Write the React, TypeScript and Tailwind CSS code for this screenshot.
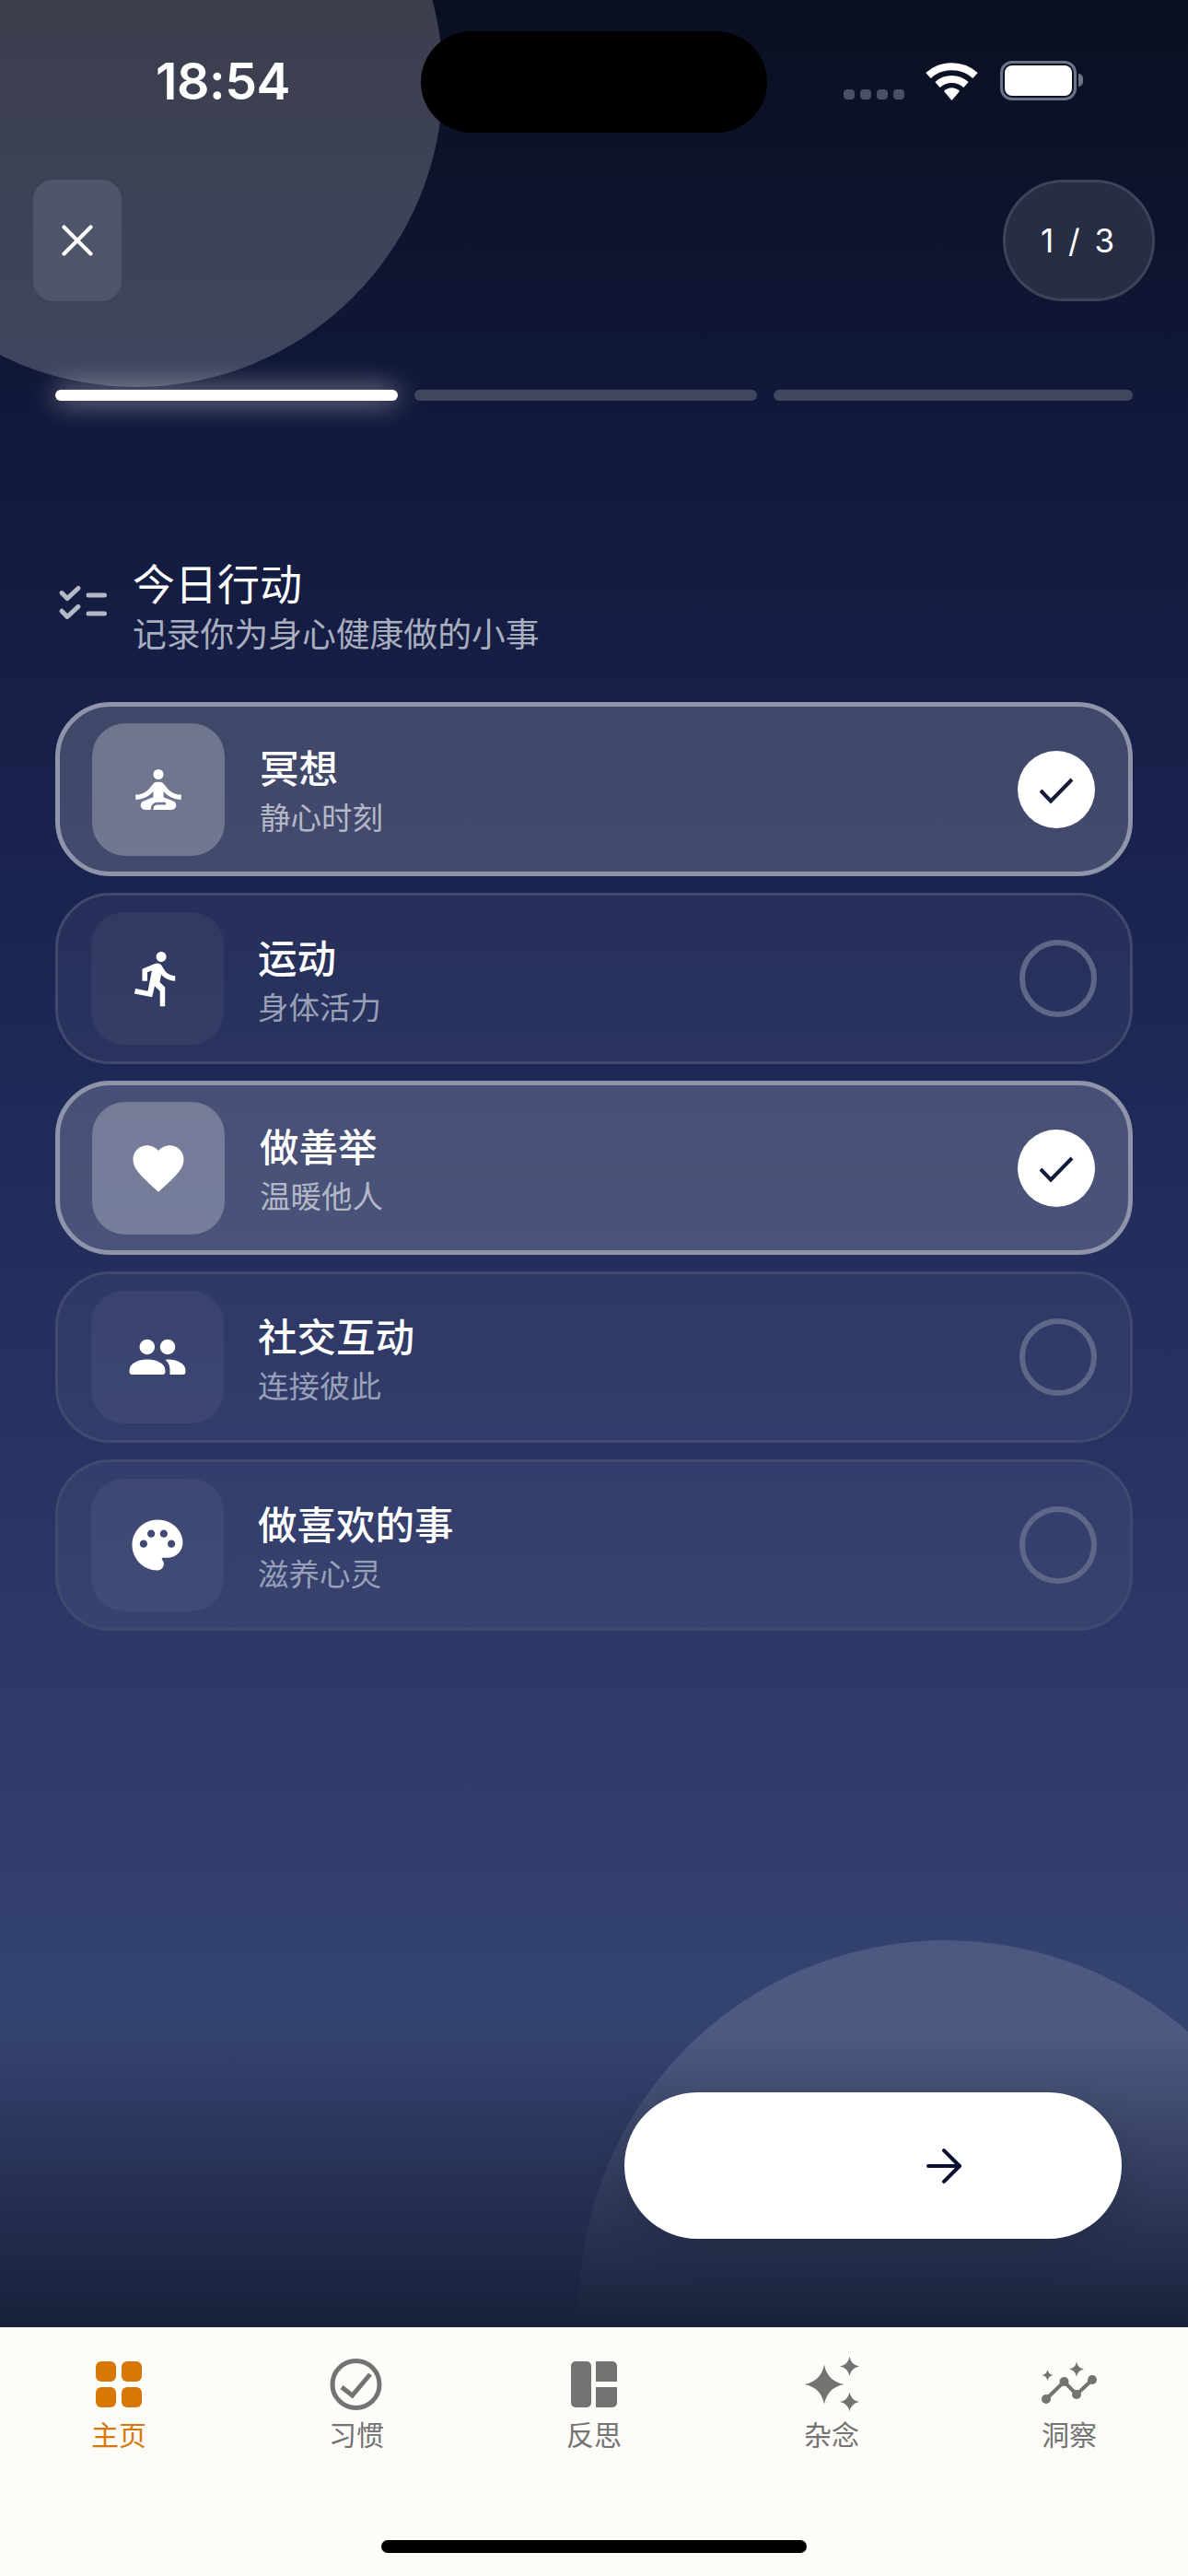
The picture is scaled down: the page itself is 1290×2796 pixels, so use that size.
import { FC, ReactNode } from "react";
import { ArrowRight, X } from "lucide-react";
import {
  MdDirectionsRun,
  MdFavorite,
  MdPalette,
  MdSelfImprovement
} from "react-icons/md";

const star = (cx: number, cy: number, r: number) => {
  const k = r * 0.16;
  return `M${cx} ${cy - r}Q${cx + k} ${cy - k} ${cx + r} ${cy}Q${cx + k} ${cy + k} ${cx} ${cy + r}Q${cx - k} ${cy + k} ${cx - r} ${cy}Q${cx - k} ${cy - k} ${cx} ${cy - r}Z`;
};

const WifiIcon = () => (
  <svg width="59" height="43" viewBox="0 0 59 43" fill="none" stroke="white">
    <path d="M4 16C18 3 41 3 55 16" strokeWidth="8" />
    <path d="M14 26C23 18 36 18 45 26" strokeWidth="8" />
    <path d="M21 33C26 28 33 28 38 33L29.5 43Z" fill="white" stroke="none" />
  </svg>
);

const PeopleIcon = () => (
  <svg width="66" height="66" viewBox="0 0 66 66" fill="white">
    <circle cx="21.8" cy="22" r="8.3" />
    <circle cx="44" cy="22" r="8.3" />
    <path d="M2.6 47C2.6 40 12 35.5 22 35.5C32 35.5 41.4 40 41.4 47V49.5A2.5 2.5 0 0 1 39 52H5A2.5 2.5 0 0 1 2.6 49.5Z" />
    <path d="M44 35.5C54 35.5 63.4 40 63.4 47V49.5A2.5 2.5 0 0 1 61 52H46.5V47C46.5 42 44.5 38.5 41.5 36Z" />
  </svg>
);

const StatusBar = () => (
  <div className="flex h-[110px] items-center pl-[169px]">
    <span className="mb-[2px] w-[288px] font-['Inter',sans-serif] text-[55.5px] font-semibold leading-none tracking-[-0.5px] text-white">
      18:54
    </span>
    <div className="h-[110px] w-[376px] rounded-[55px] bg-black" />
    <div className="mb-[4px] ml-[83px] flex items-end">
      <div className="mb-[1px] flex gap-[6px]">
        {[0, 1, 2, 3].map((i) => (
          <span key={i} className="h-[11px] w-[12px] rounded-[4px] bg-[#4a4f61]" />
        ))}
      </div>
      <div className="ml-[22px]">
        <WifiIcon />
      </div>
      <div className="ml-[23px] flex items-center">
        <div className="h-[43px] w-[83px] rounded-[13px] border-[3px] border-[#6d7285] p-[2px]">
          <div className="h-full w-full rounded-[8px] bg-white" />
        </div>
        <div className="ml-[2px] h-[14px] w-[5px] rounded-r-full bg-[#6d7285]" />
      </div>
    </div>
  </div>
);

const TopBar = () => (
  <div className="mt-[51px] flex items-center justify-between pl-[36px] pr-[36px]">
    <button className="flex h-[132px] w-[96px] items-center justify-center rounded-[22px] bg-[#50566a] text-white">
      <X size={58} strokeWidth={1.7} />
    </button>
    <div className="flex h-[132px] w-[165px] items-center justify-center rounded-[66px] border-[3px] border-[#3d4358] bg-[#272d43] font-['Inter',sans-serif] text-[35px] tracking-[3px] text-white">
      1 / 3
    </div>
  </div>
);

const Progress = () => (
  <div className="mt-[96px] flex gap-[18px] px-[60px]">
    <div className="h-[12px] w-[372px] rounded-full bg-white shadow-[0_0_30px_rgba(255,255,255,0.7)]" />
    <div className="h-[12px] w-[372px] rounded-full bg-[#3f465e]" />
    <div className="h-[12px] flex-1 rounded-full bg-[#3f465e]" />
  </div>
);

const Header = () => (
  <div className="mt-[171px] flex px-[60px]">
    <svg
      className="mt-[19px] shrink-0"
      width="60"
      height="60"
      viewBox="0 0 60 60"
      fill="none"
      stroke="#b5b9c6"
      strokeWidth="5"
      strokeLinecap="round"
      strokeLinejoin="round"
    >
      <path d="M7 18.6L13 24.6L25 13.5" />
      <path d="M7 38.2L13 44.5L25 33.4" />
      <path d="M36 21H53.5" />
      <path d="M36 41H53.5" />
    </svg>
    <div className="ml-[24px]">
      <h1 className="text-[46px] font-normal leading-[56px] text-white">今日行动</h1>
      <p className="text-[36.8px] leading-[54px] text-[#a9aebf]">记录你为身心健康做的小事</p>
    </div>
  </div>
);

interface ActionCardProps {
  icon: ReactNode;
  title: string;
  subtitle: string;
  checked?: boolean;
}

const ActionCard: FC<ActionCardProps> = ({ icon, title, subtitle, checked }) => (
  <div
    className={
      checked
        ? "flex items-center rounded-[60px] border-[5px] border-[#8f94aa] bg-white/18 py-[17.5px] pl-[35px] pr-[36px]"
        : "flex items-center rounded-[60px] border-[3px] border-[#414a6e] bg-white/5 py-[18px] pl-[36px] pr-[36px]"
    }
  >
    <div
      className={
        checked
          ? "flex h-[144px] w-[144px] shrink-0 items-center justify-center rounded-[36px] bg-white/25 text-white"
          : "flex h-[144px] w-[144px] shrink-0 items-center justify-center rounded-[36px] bg-white/5 text-white"
      }
    >
      {icon}
    </div>
    <div className={checked ? "ml-[38px] flex-1 pt-[5px]" : "ml-[37px] flex-1 pt-[5px]"}>
      <p className="text-[42.5px] font-medium leading-[58px] text-white">{title}</p>
      <p
        className={
          checked
            ? "text-[33.5px] leading-[48px] text-[#b4b8c6]"
            : "text-[33.5px] leading-[48px] text-[#98a0b8]"
        }
      >
        {subtitle}
      </p>
    </div>
    {checked ? (
      <div className="h-[84px] w-[84px] rounded-full bg-white">
        <svg width="84" height="84" viewBox="0 0 84 84" fill="none" stroke="#141b3a" strokeWidth="4">
          <path d="M25 43L36 54.5L59 31" />
        </svg>
      </div>
    ) : (
      <div className="h-[84px] w-[84px] rounded-full border-[6px] border-[#5e6788]" />
    )}
  </div>
);

const actions: ActionCardProps[] = [
  { icon: <MdSelfImprovement size={66} />, title: "冥想", subtitle: "静心时刻", checked: true },
  { icon: <MdDirectionsRun size={66} />, title: "运动", subtitle: "身体活力" },
  { icon: <MdFavorite size={66} />, title: "做善举", subtitle: "温暖他人", checked: true },
  { icon: <PeopleIcon />, title: "社交互动", subtitle: "连接彼此" },
  { icon: <MdPalette size={66} />, title: "做喜欢的事", subtitle: "滋养心灵" }
];

const grey = "#737373";

const HomeIcon = () => (
  <svg width="60" height="60" viewBox="0 0 60 60" fill="#d97706">
    <rect x="5" y="5" width="22" height="22" rx="6" />
    <rect x="33" y="5" width="22" height="22" rx="6" />
    <rect x="5" y="33" width="22" height="22" rx="6" />
    <rect x="33" y="33" width="22" height="22" rx="6" />
  </svg>
);

const HabitIcon = () => (
  <svg width="60" height="60" viewBox="0 0 60 60" fill="none" stroke={grey} strokeWidth="5">
    <circle cx="29.5" cy="30" r="25.5" />
    <path d="M14 33L25.5 42L45 19" />
  </svg>
);

const ReflectIcon = () => (
  <svg width="60" height="60" viewBox="0 0 60 60" fill={grey}>
    <rect x="5" y="5" width="22" height="50" rx="5" />
    <path d="M32 5H50A5 5 0 0 1 55 10V27H32Z" />
    <path d="M32 33H55V50A5 5 0 0 1 50 55H32Z" />
  </svg>
);

const MusingIcon = () => (
  <svg width="60" height="60" viewBox="0 0 60 60" fill={grey}>
    <path d={star(22, 30, 21.5)} />
    <path d={star(49.5, 10.5, 10.5)} />
    <path d={star(49.5, 49, 10.5)} />
  </svg>
);

const InsightIcon = () => (
  <svg width="60" height="60" viewBox="0 0 60 60" fill={grey}>
    <path d="M5 46L24.5 27L38 41L55 25" fill="none" stroke={grey} strokeWidth="4" />
    <circle cx="5" cy="46" r="5" />
    <circle cx="24.5" cy="27" r="5" />
    <circle cx="38" cy="41" r="5" />
    <circle cx="55" cy="25" r="5" />
    <path d={star(38, 13.5, 8)} />
    <path d={star(6.5, 20, 6)} />
  </svg>
);

const tabs = [
  { label: "主页", icon: <HomeIcon />, active: true },
  { label: "习惯", icon: <HabitIcon /> },
  { label: "反思", icon: <ReflectIcon /> },
  { label: "杂念", icon: <MusingIcon /> },
  { label: "洞察", icon: <InsightIcon /> }
];

const TabBar = () => (
  <div className="h-[270px] shrink-0 bg-[#fdfcf8] pt-[32px]">
    <div className="grid grid-cols-5">
      {tabs.map((tab) => (
        <div key={tab.label} className="flex flex-col items-center">
          {tab.icon}
          <span
            className={
              tab.active
                ? "mt-[5px] text-[30px] leading-[40px] text-[#d97706]"
                : "mt-[5px] text-[30px] leading-[40px] text-[#737373]"
            }
          >
            {tab.label}
          </span>
        </div>
      ))}
    </div>
    <div className="mx-auto mt-[94px] h-[14px] w-[462px] rounded-full bg-black" />
  </div>
);

export default function App() {
  return (
    <div className="flex h-[2796px] w-[1290px] flex-col overflow-hidden font-['Inter','Noto_Sans_CJK_SC',sans-serif]">
      <div className="relative flex-1 overflow-hidden bg-[linear-gradient(180deg,#0a0f20_0%,#11183a_18%,#1b2552_40%,#283363_62%,#34426f_85%,#35436f_100%)]">
        <div className="absolute -left-[185px] -top-[246px] h-[666px] w-[666px] rounded-full bg-white/20" />
        <div className="absolute -right-[135px] -bottom-[376px] h-[796px] w-[796px] rounded-full bg-white/12" />
        <div className="absolute inset-x-0 bottom-0 h-[320px] bg-[linear-gradient(180deg,rgba(24,32,58,0)_0%,rgba(24,32,58,1)_100%)]" />

        <div className="relative pt-[34px]">
          <StatusBar />
          <TopBar />
          <Progress />
          <Header />
          <div className="mt-[46px] flex flex-col gap-[18px] px-[60px]">
            {actions.map((action) => (
              <ActionCard key={action.title} {...action} />
            ))}
          </div>
        </div>

        <div className="absolute bottom-[96px] left-[678px] flex h-[159px] w-[540px] items-center justify-end rounded-full bg-white pr-[164px] shadow-[0_10px_40px_rgba(0,0,0,0.12)]">
          <ArrowRight size={58} strokeWidth={1.7} color="#0b1030" />
        </div>
      </div>
      <TabBar />
    </div>
  );
}
